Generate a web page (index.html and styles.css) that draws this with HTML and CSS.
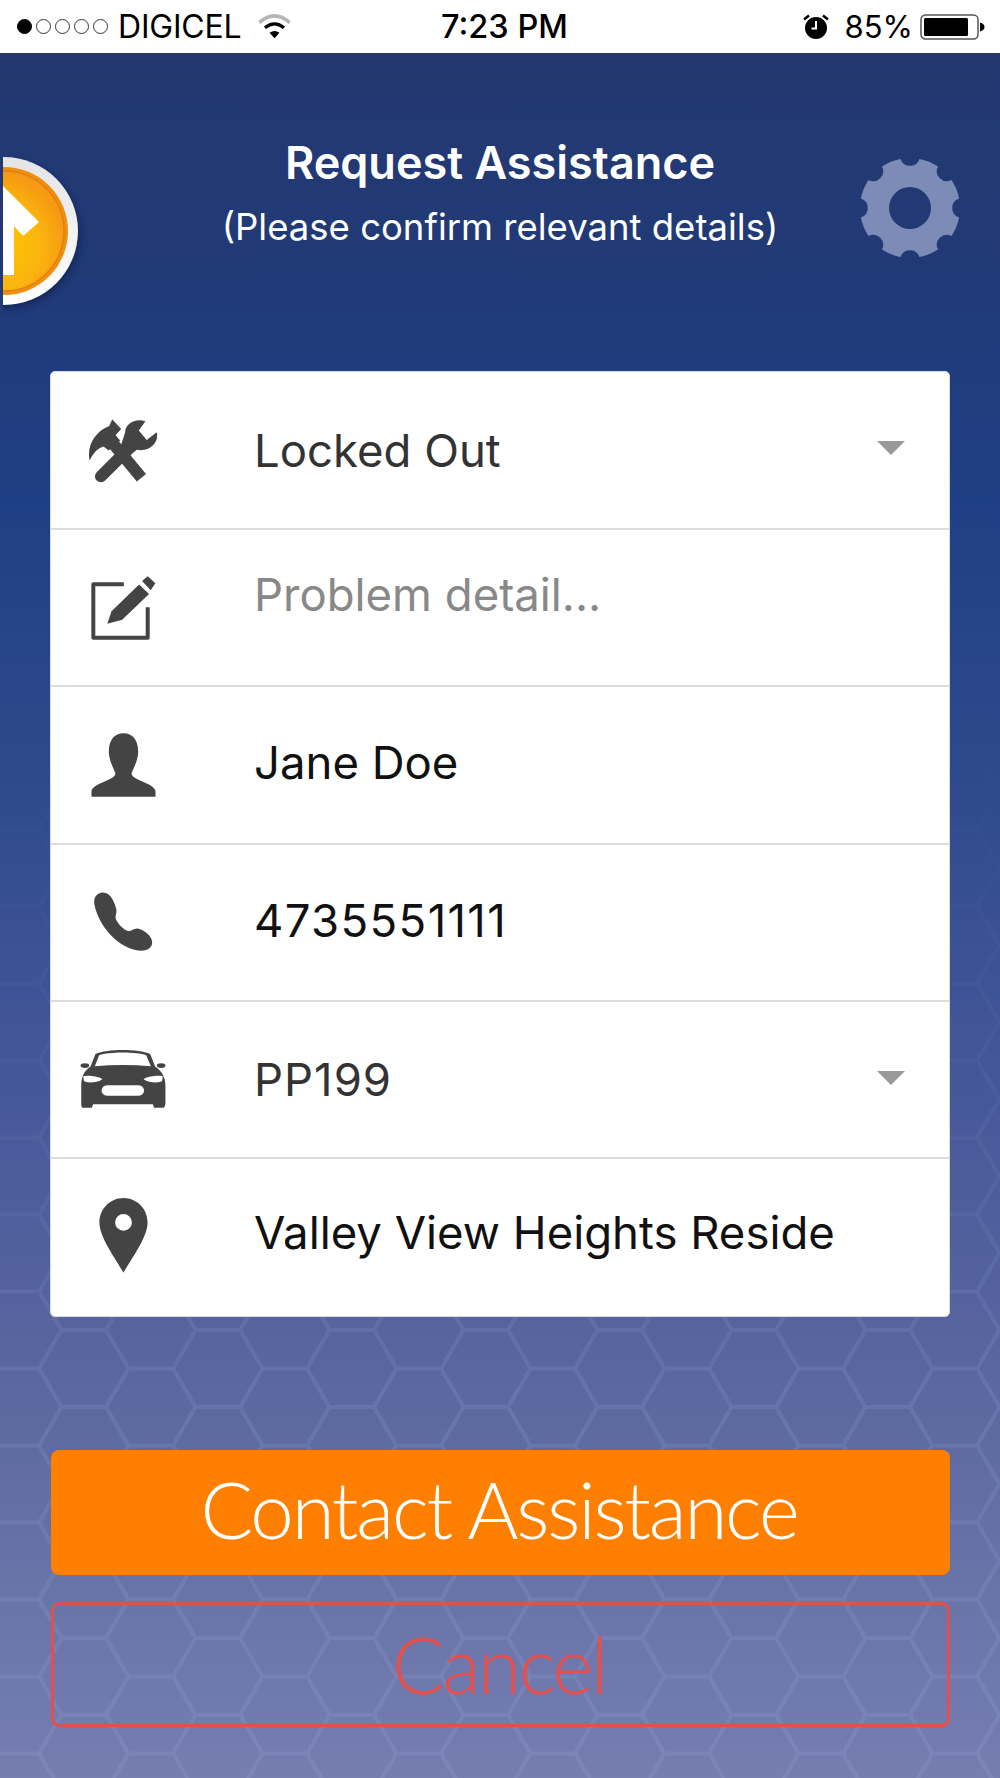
FILE: index.html
```html
<!DOCTYPE html>
<html lang="en">
<head>
<meta charset="utf-8">
<title>Request Assistance</title>
<link rel="stylesheet" href="styles.css">
</head>
<body>
<div class="page">
  <svg class="hex-layer" width="1000" height="1778" aria-hidden="true">
    <defs>
      <pattern id="hex" x="39" y="1330" width="134" height="77" patternUnits="userSpaceOnUse">
        <path class="hex-line" d="M0 38.5L22.5 0H67L89.5 38.5L67 77H22.5L0 38.5M89.5 38.5H134"/>
      </pattern>
    </defs>
    <rect width="1000" height="1778" fill="url(#hex)"/>
  </svg>

  <div class="status">
    <div class="status-left">
      <div class="dots"><i class="dot on"></i><i class="dot"></i><i class="dot"></i><i class="dot"></i><i class="dot"></i></div>
      <span class="carrier">DIGICEL</span>
      <svg class="wifi" viewBox="768 42 100 76" width="33" height="25">
        <path d="M772 68Q818 28 864 68" fill="none" stroke="#b5b5b5" stroke-width="11"/>
        <path d="M789 84Q818 60 847 84" fill="none" stroke="#000" stroke-width="10"/>
        <path d="M803 99Q818 88 833 99L818 116Z" fill="#000"/>
      </svg>
    </div>
    <div class="time">7:23 PM</div>
    <div class="status-right">
      <svg class="alarm" viewBox="0 0 26 25" width="26" height="25">
        <circle cx="13" cy="14" r="11" fill="#000"/>
        <path d="M13 7V14.5H8.5" fill="none" stroke="#fff" stroke-width="2"/>
        <path d="M1 5.500L6 1.500M25 5.500L20 1.500" stroke="#000" stroke-width="2.600" fill="none"/>
      </svg>
      <span class="pct">85%</span>
      <svg class="battery" viewBox="0 0 65 26" width="65" height="26">
        <rect x="1" y="1" width="57" height="24" rx="4.500" fill="#fff" stroke="#555" stroke-width="1.500"/>
        <rect x="4" y="4" width="44" height="18" rx="1.500" fill="#000"/>
        <path d="M60 8.500C63 9 64.500 11 64.500 13S63 17 60 17.500Z" fill="#000"/>
      </svg>
    </div>
  </div>

  <header class="head">
    <svg class="logo" viewBox="3 153 85 165" width="85" height="165" aria-hidden="true">
      <defs>
        <radialGradient id="disc" cx="0.42" cy="0.62" r="0.6">
          <stop offset="0" stop-color="#ffc800"/>
          <stop offset="0.65" stop-color="#fbb40e"/>
          <stop offset="1" stop-color="#f59a12"/>
        </radialGradient>
        <linearGradient id="ring" x1="0.500" y1="0" x2="0.500" y2="1">
          <stop offset="0" stop-color="#e4e4e6"/>
          <stop offset="1" stop-color="#fff"/>
        </linearGradient>
        <filter id="soft" x="-30%" y="-30%" width="160%" height="160%"><feGaussianBlur stdDeviation="3"/></filter>
      </defs>
      <circle cx="7" cy="235" r="74" fill="#0c1c48" opacity=".55" filter="url(#soft)"/>
      <circle cx="4" cy="231" r="74" fill="url(#ring)"/>
      <circle cx="4" cy="231" r="64" fill="#ee8f10"/>
      <circle cx="4" cy="231" r="60" fill="url(#disc)" stroke="#e37f12" stroke-width="1.500"/>
      <path d="M0 183L39 222L23 236L14 226V275H0Z" fill="#fff"/>
    </svg>
    <div class="head-text">
      <h1 class="title">Request Assistance</h1>
      <p class="subtitle">(Please confirm relevant details)</p>
    </div>
    <svg class="gear" viewBox="-51 -51 102 102" width="102" height="102" aria-hidden="true">
      <path fill-rule="evenodd" d="M49.100 9.500A50 50 0 0 1 41.500 28A10 10 0 0 0 28 41.500A50 50 0 0 1 9.500 49.100A10 10 0 0 0 -9.500 49.100A50 50 0 0 1 -28 41.500A10 10 0 0 0 -41.500 28A50 50 0 0 1 -49.100 9.500A10 10 0 0 0 -49.100 -9.500A50 50 0 0 1 -41.500 -28A10 10 0 0 0 -28 -41.500A50 50 0 0 1 -9.500 -49.100A10 10 0 0 0 9.500 -49.100A50 50 0 0 1 28 -41.500A10 10 0 0 0 41.500 -28A50 50 0 0 1 49.100 -9.500A10 10 0 0 0 49.100 9.500ZM21 0A21 21 0 1 0 -21 0A21 21 0 1 0 21 0Z"/>
    </svg>
  </header>

  <section class="card">
    <div class="row">
      <div class="slot">
        <svg class="icon" viewBox="140 170 220 200" width="73" height="67">
          <path d="M216 246L304 352" class="ink-line wide"/>
          <path d="M148 300C138 255 165 212 207 196L216 176L243 205L226 224L240 240L205 270L190 258C175 262 160 275 148 300Z"/>
          <path d="M182 348L276 254" class="ink-line wide round"/>
          <path d="M255 215C255 190 285 172 316 182L296 210L320 238L350 215C358 245 330 275 290 268L262 290L240 262Z"/>
        </svg>
      </div>
      <span class="value dim nudge-down">Locked Out</span>
      <i class="caret"></i>
    </div>
    <div class="row">
      <div class="slot">
        <svg class="icon" viewBox="145 640 205 205" width="68" height="68">
          <path d="M250 671H158V832H322V740" class="ink-line"/>
          <path d="M200 790L213 752L296 672L326 700L245 778Z"/>
          <path d="M305 661L322 647L345 668L331 689Z"/>
        </svg>
      </div>
      <span class="value placeholder">Problem detail...</span>
    </div>
    <div class="row">
      <div class="slot">
        <svg class="icon" viewBox="148 1116 200 198" width="67" height="66">
          <path d="M248 1120C275 1120 292 1140 292 1175C292 1200 278 1225 272 1240C272 1262 344 1270 344 1295V1310H152V1295C152 1270 224 1262 224 1240C218 1225 204 1200 204 1175C204 1140 221 1120 248 1120Z"/>
        </svg>
      </div>
      <span class="value raised">Jane Doe</span>
    </div>
    <div class="row">
      <div class="slot">
        <svg class="icon" viewBox="155 185 186 186" width="62" height="62">
          <path d="M162 225C158 200 175 188 192 190C210 192 222 215 228 240C230 255 222 262 228 272C238 290 250 300 262 305C272 308 280 295 295 298C318 305 340 325 335 345C330 362 310 368 285 362C230 350 175 290 162 225Z"/>
        </svg>
      </div>
      <span class="value raised digits">4735551111</span>
    </div>
    <div class="row">
      <div class="slot">
        <svg class="icon car" viewBox="116 656 264 184" width="88" height="61">
          <path fill-rule="evenodd" d="M122 770C122 745 130 725 150 712L165 674C200 658 295 658 330 674L345 712C365 725 376 745 376 770V822C376 826 374 836 370 836H342L338 826H158L154 836H126C122 836 122 826 122 822ZM163 711C220 706 275 706 332 711L318 678C290 667 205 667 176 678ZM128 742C135 738 170 740 186 750C170 762 135 762 130 755ZM368 742C361 738 326 740 310 750C326 762 361 762 366 755ZM200 768C178 770 178 798 200 800H295C317 798 317 770 295 768Z"/>
          <ellipse cx="133" cy="709" rx="13" ry="7"/>
          <ellipse cx="363" cy="709" rx="13" ry="7"/>
        </svg>
      </div>
      <span class="value dim plate">PP199</span>
      <i class="caret"></i>
    </div>
    <div class="row">
      <div class="slot">
        <svg class="icon pin" viewBox="172 1104 152 230" width="51" height="77">
          <path fill-rule="evenodd" d="M248 1107C288 1107 320 1140 320 1180C320 1225 270 1290 248 1330C226 1290 176 1225 176 1180C176 1140 208 1107 248 1107ZM248 1155A25 25 0 1 0 248 1205A25 25 0 1 0 248 1155Z"/>
        </svg>
      </div>
      <span class="value raised-more">Valley View Heights Reside</span>
    </div>
  </section>

  <div class="actions">
    <a class="btn primary">Contact Assistance</a>
    <a class="btn ghost">Cancel</a>
  </div>
</div>
</body>
</html>
```

FILE: styles.css
```css
* { box-sizing: border-box; }
html, body { margin: 0; padding: 0; }
body { font-family: Inter, "Liberation Sans", sans-serif; }

.page {
  position: relative;
  isolation: isolate;
  width: 1000px;
  height: 1778px;
  overflow: hidden;
  background: linear-gradient(180deg, #24386f 53px, #213a76 250px, #1f3f84 500px, #2f4b8d 800px, #47589a 1100px, #58669f 1350px, #767eb0 1778px);
}
.hex-layer {
  position: absolute;
  left: 0;
  top: 0;
  z-index: -1;
  -webkit-mask-image: linear-gradient(180deg, transparent 700px, rgba(0,0,0,.45) 1100px, #000 1400px);
  mask-image: linear-gradient(180deg, transparent 700px, rgba(0,0,0,.45) 1100px, #000 1400px);
}
.hex-line { fill: none; stroke: rgba(170, 190, 240, .13); stroke-width: 4; }

/* status bar */
.status {
  display: grid;
  grid-template-columns: 441px auto 1fr;
  align-items: center;
  height: 53px;
  background: #fff;
  color: #000;
  font-size: 31px;
  line-height: 53px;
}
.status-left { display: flex; align-items: center; padding-left: 17px; }
.dots { display: flex; gap: 4px; }
.dot { width: 15px; height: 15px; border-radius: 50%; border: 1.5px solid #333; }
.dot.on { background: #000; border-color: #000; }
.carrier { margin-left: 10px; font-size: 32px; letter-spacing: -.2px; }
.wifi { margin-left: 17px; }
.time { font-weight: 500; font-size: 32.500px; }
.status-right { display: flex; align-items: center; justify-content: flex-end; padding-right: 15px; }
.pct { margin: 0 7px 0 16px; }

/* header */
.head {
  display: grid;
  grid-template-columns: 150px 1fr 150px;
  align-items: start;
  height: 318px;
}
.logo { display: block; margin: 100px 0 0 3px; }
.head-text { padding-top: 83px; text-align: center; color: #fff; }
.title { margin: 0; font-size: 45px; line-height: 54px; font-weight: 600; }
.subtitle { margin: 12px 0 0; font-size: 36.500px; line-height: 50px; font-weight: 400; }
.gear { display: block; margin: 104px 0 0 9px; fill: #7c8cb6; }

/* card */
.card {
  margin: 0 50px;
  background: #fff;
  border: 1.5px solid #d6dbe6;
  border-radius: 5px;
  display: flex;
  flex-direction: column;
}
.row {
  height: 157.300px;
  display: flex;
  align-items: center;
  border-top: 2px solid #dcdcdc;
}
.row:first-child { height: 156px; border-top: 0; }
.row:last-child { height: 158.500px; }
.slot { flex: 0 0 144px; display: flex; justify-content: center; }
.icon { display: block; fill: #444; }
.icon.car { margin-top: -3px; }
.icon.pin { margin-top: -3px; }
.ink-line { fill: none; stroke: #444; stroke-width: 12; stroke-linejoin: round; }
.ink-line.wide { stroke-width: 36; }
.ink-line.round { stroke-linecap: round; }
.value {
  margin-left: 59px;
  font-size: 45.500px;
  line-height: 60px;
  color: #111;
  white-space: nowrap;
}
.value.dim { color: #333; }
.value.nudge-down { margin-top: 2px; }
.value.placeholder { color: #888; margin-bottom: 26px; }
.value.raised { margin-bottom: 3px; }
.value.raised-more { margin-bottom: 8px; }
.value.digits { letter-spacing: 1.360px; }
.value.plate { letter-spacing: 1px; }
.caret {
  margin: -4px 44px 0 auto;
  width: 0;
  height: 0;
  border-left: 14px solid transparent;
  border-right: 14px solid transparent;
  border-top: 14px solid #999;
}

/* actions */
.actions { display: flex; flex-direction: column; gap: 27px; margin: 133px 50px 0 51px; }
.btn {
  display: block;
  height: 125px;
  padding-right: 3px;
  border-radius: 8px;
  font-family: Lato, "Open Sans", sans-serif;
  font-weight: 300;
  font-size: 78px;
  letter-spacing: -2.200px;
  line-height: 118px;
  text-align: center;
}
.primary { background: #ff8000; color: #fff; }
.ghost { border: 3px solid #dd5152; color: #e5504c; }
```
